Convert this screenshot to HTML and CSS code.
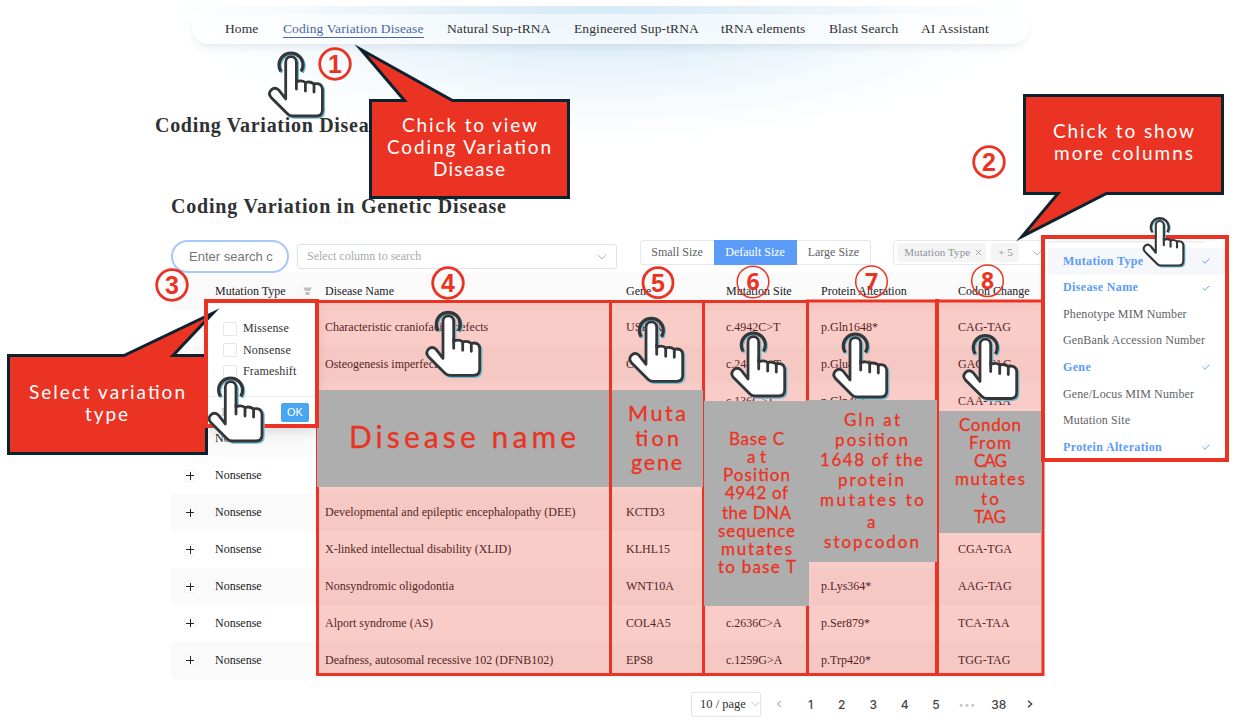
FILE: index.html
```html
<!DOCTYPE html>
<html lang="en">
<head>
<meta charset="utf-8">
<title>Coding Variation Disease</title>
<link rel="stylesheet" href="styles.css">
</head>
<body>
<div class="page">
  <header class="hero">
    <nav class="nav">
      <a>Home</a><a><span class="active">Coding Variation Disease</span></a><a>Natural Sup-tRNA</a><a>Engineered Sup-tRNA</a><a>tRNA elements</a><a>Blast Search</a><a>AI Assistant</a>
    </nav>
  </header>
  <h1 class="title">Coding Variation Disease</h1>
  <main class="content">
    <h2 class="subtitle">Coding Variation in Genetic Disease</h2>
    <div class="toolbar">
      <div class="search"><span>Enter search content</span></div>
      <div class="select"><span>Select column to search</span><svg class="chev" viewBox="0 0 10 6"><path d="M1 1l4 4 4-4"/></svg></div>
      <div class="sizes"><span class="small">Small Size</span><span class="on">Default Size</span><span class="large">Large Size</span></div>
      <div class="multi"><span class="tag">Mutation Type <svg viewBox="0 0 8 8"><path d="M1 1l6 6M7 1l-6 6"/></svg></span><span class="tag count">+ 5</span><svg class="chev" viewBox="0 0 10 6"><path d="M1 1l4 4 4-4"/></svg></div>
    </div>
    <div class="table">
      <div class="row head"><i></i><b class="type">Mutation Type<svg viewBox="0 0 10 10"><path d="M0 .5h10L7.500 4.500h-5zM2.800 5.500h4.400V9H2.800z"/></svg></b><b>Disease Name</b><b>Gene</b><b>Mutation Site</b><b>Protein Alteration</b><b>Codon Change</b></div>
      <div class="row"><i class="plus"></i><span>Nonsense</span><span>Characteristic craniofacial defects</span><span>USP9X</span><span>c.4942C&gt;T</span><span>p.Gln1648*</span><span>CAG-TAG</span></div>
      <div class="row"><i class="plus"></i><span>Nonsense</span><span>Osteogenesis imperfecta</span><span>COL1A1</span><span>c.2437G&gt;T</span><span>p.Glu813*</span><span>GAG-TAG</span></div>
      <div class="row"><i class="plus"></i><span>Nonsense</span><span></span><span></span><span>c.136C&gt;T</span><span>p.Gln46*</span><span>CAA-TAA</span></div>
      <div class="row"><i class="plus"></i><span>Nonsense</span><span></span><span></span><span></span><span></span><span></span></div>
      <div class="row"><i class="plus"></i><span>Nonsense</span><span></span><span></span><span></span><span></span><span></span></div>
      <div class="row"><i class="plus"></i><span>Nonsense</span><span>Developmental and epileptic encephalopathy (DEE)</span><span>KCTD3</span><span></span><span></span><span></span></div>
      <div class="row"><i class="plus"></i><span>Nonsense</span><span>X-linked intellectual disability (XLID)</span><span>KLHL15</span><span></span><span></span><span>CGA-TGA</span></div>
      <div class="row"><i class="plus"></i><span>Nonsense</span><span>Nonsyndromic oligodontia</span><span>WNT10A</span><span></span><span>p.Lys364*</span><span>AAG-TAG</span></div>
      <div class="row"><i class="plus"></i><span>Nonsense</span><span>Alport syndrome (AS)</span><span>COL4A5</span><span>c.2636C&gt;A</span><span>p.Ser879*</span><span>TCA-TAA</span></div>
      <div class="row"><i class="plus"></i><span>Nonsense</span><span>Deafness, autosomal recessive 102 (DFNB102)</span><span>EPS8</span><span>c.1259G&gt;A</span><span>p.Trp420*</span><span>TGG-TAG</span></div>
    </div>
    <div class="pager">
      <div class="per"><span>10 / page</span><svg class="chev" viewBox="0 0 10 6"><path d="M1 1l4 4 4-4"/></svg></div>
      <div class="pages"><svg class="arrow dim" viewBox="0 0 6 8"><path d="M5 1L1.500 4 5 7"/></svg><span>1</span><span>2</span><span>3</span><span>4</span><span>5</span><span class="dots">•••</span><span>38</span><svg class="arrow" viewBox="0 0 6 8"><path d="M1 .7L4.800 4 1 7.300"/></svg></div>
    </div>
  </main>

  <div class="filter">
    <div class="opts"><label><i></i>Missense</label><label><i></i>Nonsense</label><label><i></i>Frameshift</label></div>
    <div class="acts"><span class="reset">Reset</span><span class="ok">OK</span></div>
  </div>

  <div class="menu">
    <div class="edge"></div>
    <div class="item sel hover">Mutation Type<svg viewBox="0 0 8 6"><path d="M.7 3l2.300 2.300L7.300.7"/></svg></div>
    <div class="item sel">Disease Name<svg viewBox="0 0 8 6"><path d="M.7 3l2.300 2.300L7.300.7"/></svg></div>
    <div class="item">Phenotype MIM Number</div>
    <div class="item">GenBank Accession Number</div>
    <div class="item sel">Gene<svg viewBox="0 0 8 6"><path d="M.7 3l2.300 2.300L7.300.7"/></svg></div>
    <div class="item">Gene/Locus MIM Number</div>
    <div class="item">Mutation Site</div>
    <div class="item sel">Protein Alteration<svg viewBox="0 0 8 6"><path d="M.7 3l2.300 2.300L7.300.7"/></svg></div>
  </div>

  <svg class="notes" viewBox="0 0 1244 724">
    <defs>
      <g id="hand">
        <g class="glow" transform="translate(1.2 1.200)">
          <path class="ring" d="M13.200 21.500A12 12 0 1 1 33.400 21.500"/>
          <path d="M18 49V12.200a5.300 5.500 0 0 1 10.700 0V32q5-2.500 9 .5q5-1.500 8.500 1.500q8-1.500 8.500 5V60q0 6-6 6H25q-3 0-5-2L3.500 47.500q-3.500-4 0-7.500q3.500-3.500 7.500 0z"/>
        </g>
        <path class="ring" d="M13.200 21.500A12 12 0 1 1 33.400 21.500"/>
        <path class="palm" d="M18 49V12.200a5.300 5.500 0 0 1 10.700 0V32q5-2.500 9 .5q5-1.500 8.500 1.500q8-1.500 8.500 5V60q0 6-6 6H25q-3 0-5-2L3.500 47.500q-3.500-4 0-7.500q3.500-3.500 7.500 0z"/>
        <path class="palm" d="M28.700 30v9M37.700 32.500v8.500M46.300 34v8"/>
      </g>
    </defs>

    <g class="zones">
      <rect x="317.500" y="301.500" width="293" height="373"/>
      <rect x="610.500" y="301.500" width="93" height="373"/>
      <rect x="703.500" y="301.500" width="104" height="373"/>
      <rect x="807.500" y="301" width="129.500" height="373.500"/>
      <rect x="937" y="301" width="106" height="373.500"/>
    </g>
    <path class="rule" d="M937 299v377"/>
    <g class="plates">
      <rect x="317" y="390" width="292" height="97"/>
      <rect x="612" y="390" width="91" height="97"/>
      <rect x="704" y="401" width="105" height="205"/>
      <rect x="807" y="400" width="130" height="162"/>
      <rect x="939" y="411" width="103" height="122"/>
    </g>

    <g class="callouts">
      <path d="M370.500 100.500H404.500L361 49.500L452.500 100.500H568.500V197.500H370.500Z"/>
      <path d="M1024.500 95.500H1222.500V193.500H1106.500L1022 236.500L1058 193.500H1024.500Z"/>
      <path d="M8.500 355.500H124L213 313L173 355.500H206.500V453.500H8.500Z"/>
    </g>
    <g class="frames">
      <rect x="206" y="301" width="111" height="125"/>
      <rect x="1043" y="237" width="184" height="223"/>
    </g>

    <g class="say">
      <text x="402" y="132" textLength="135">Chick to view</text>
      <text x="387" y="154" textLength="164">Coding Variation</text>
      <text x="433" y="176" textLength="72">Disease</text>
      <text x="1053" y="138" textLength="141">Chick to show</text>
      <text x="1054" y="160" textLength="139">more columns</text>
      <text x="29" y="399" textLength="156">Select variation</text>
      <text x="85" y="421" textLength="43">type</text>
    </g>
    <g class="ink">
      <text class="xl" x="349" y="448" textLength="227">Disease name</text>
      <g class="lg">
        <text x="628" y="420.500" textLength="58">Muta</text>
        <text x="635" y="446" textLength="44">tion</text>
        <text x="631" y="470" textLength="51">gene</text>
      </g>
      <text x="729" y="445" textLength="55">Base C</text>
      <text x="747" y="463" textLength="19">at</text>
      <text x="723" y="481" textLength="67">Position</text>
      <text x="725" y="499" textLength="63">4942 of</text>
      <text x="722" y="519" textLength="69">the DNA</text>
      <text x="718" y="537" textLength="77">sequence</text>
      <text x="721" y="554.500" textLength="71">mutates</text>
      <text x="718" y="573" textLength="78">to base T</text>
      <text x="844" y="426" textLength="56">Gln at</text>
      <text x="835" y="446" textLength="73">position</text>
      <text x="820" y="466" textLength="103">1648 of the</text>
      <text x="838" y="486" textLength="66">protein</text>
      <text x="820" y="506" textLength="104">mutates to</text>
      <text x="867" y="528">a</text>
      <text x="824" y="548" textLength="95">stopcodon</text>
      <text x="959" y="431" textLength="62">Condon</text>
      <text x="969" y="449" textLength="42">From</text>
      <text x="974" y="467" textLength="33">CAG</text>
      <text x="955" y="485" textLength="70">mutates</text>
      <text x="981" y="505" textLength="18">to</text>
      <text x="974" y="523" textLength="32">TAG</text>
    </g>

    <use href="#hand" x="267.700" y="50"/>
    <use href="#hand" transform="translate(1142.300 216) scale(.75)"/>
    <use href="#hand" x="207.300" y="375"/>
    <use href="#hand" x="425" y="309.300"/>
    <use href="#hand" x="628" y="315.300"/>
    <use href="#hand" x="730" y="330"/>
    <use href="#hand" x="832" y="331"/>
    <use href="#hand" x="962" y="332.500"/>

    <g class="nums">
      <circle cx="335" cy="64" r="15.300"/><text x="335" y="73">1</text>
      <circle cx="989" cy="162" r="15.300"/><text x="989" y="171">2</text>
      <circle cx="172" cy="285" r="15.300"/><text x="172" y="294">3</text>
      <circle cx="448" cy="283" r="15.300"/><text x="448" y="292">4</text>
      <circle cx="658" cy="282.700" r="15"/><text x="658" y="291.700">5</text>
    </g>
    <g class="nums thin">
      <circle cx="753" cy="282" r="15.800"/><text x="753" y="290">6</text>
      <circle cx="871.500" cy="281.700" r="15.800"/><text x="871.500" y="290">7</text>
      <circle cx="987.500" cy="280.700" r="15.800"/><text x="987.500" y="289">8</text>
    </g>
  </svg>
</div>
</body>
</html>
```
FILE: styles.css
```css
* { box-sizing: border-box; }
body { margin: 0; background: #fff; font-family: "Liberation Serif", serif; color: #303133; }
.page { position: relative; width: 1244px; height: 724px; overflow: hidden; padding-top: 6px; }
svg { fill: none; }

.hero { height: 102px; padding: 8px 216px 0 192px; margin-bottom: -1px;
  background: radial-gradient(ellipse 440px 135px at 600px 0, #d5eaf6 0%, #e3f0f9 35%, #f5fafd 70%, rgba(255,255,255,0) 100%); height: 140px; }
.nav { display: grid; grid-template-columns: 58px 164px 127px 147px 108px 92px 90px; height: 30px; padding-left: 33px;
  border-radius: 0 0 16px 16px; background: rgba(255,255,255,.58); box-shadow: 0 5px 10px -3px rgba(60,90,110,.14);
  font-size: 13.5px; line-height: 30px; white-space: nowrap; letter-spacing: .12px; }
.active { color: #4a66a5; border-bottom: 1.500px solid #4a66a5; padding-bottom: 1px; }
.title { margin: -32px 0 0 155px; font-size: 20px; line-height: 22px; letter-spacing: .7px; }
.content { padding: 0 200px 0 171px; }
.subtitle { margin: 58px 0 22px; font-size: 20px; line-height: 24px; letter-spacing: .8px; }

.toolbar { display: flex; width: 874px; height: 33px; }
.search { width: 118px; height: 33px; padding: 0 16px; border: 2px solid #a6c8fb; border-radius: 17px; font: 13px/30px "Liberation Sans", sans-serif; color: #757575; }
.search span { display: block; width: 84px; overflow: hidden; white-space: nowrap; }
.select { display: flex; align-items: center; justify-content: space-between; width: 320px; height: 25px; margin: 4px 23px 0 8px; padding: 0 9px; border: 1px solid #dfe2e8; border-radius: 3px; font-size: 12px; color: #a8abb2; }
.chev { width: 10px; height: 6px; stroke: #b4b7bd; stroke-width: 1; }
.sizes { display: flex; width: 232px; height: 25px; margin-right: 22px; border: 1px solid #e4e7ed; border-radius: 3px; font-size: 12px; line-height: 23px; text-align: center; color: #606266; }
.small { width: 73px; } .large { flex: 1; }
.on { width: 83px; margin: -1px 0; line-height: 25px; background: #5a9cf8; color: #fff; }
.multi { display: flex; align-items: center; gap: 5px; width: 152px; height: 25px; padding-left: 3px; border: 1px solid #e4e7ed; border-radius: 3px; }
.multi .chev { margin-left: 8px; }
.tag { width: 89px; height: 19px; padding-left: 7px; border-radius: 3px; background: #f4f4f5; font-size: 11px; line-height: 19px; letter-spacing: .1px; color: #909399; white-space: nowrap; }
.tag svg { width: 7px; height: 7px; margin-left: 2px; stroke: #909399; stroke-width: .9; }
.tag.count { width: 28px; }

.table { width: 873px; font-size: 12px; }
.row { display: grid; grid-template-columns: 44px 110px 301px 100px 95px 137px 86px; height: 36.950px; align-items: center; color: #202124; white-space: nowrap; }
.row:nth-child(odd) { background: #fafafa; }
.row b { font-weight: 400; }
.row.head { height: 36.500px; }
.type { display: flex; align-items: center; }
.type svg { width: 9px; height: 9px; margin-left: 17px; fill: #bfbfbf; }
.plus { justify-self: start; width: 12px; height: 12px; margin-left: 13px; border: 1px solid #f3f3f3; border-radius: 2px;
  background: linear-gradient(#222, #222) center / 8px 1px no-repeat, linear-gradient(#222, #222) center / 1px 8px no-repeat, #fff; }

.pager { display: flex; width: 873px; height: 25px; margin-top: 13px; padding-left: 520px; }
.per { display: flex; align-items: center; width: 78px; padding-left: 8px; gap: 5px; border: 1px solid #e5e5e5; border-radius: 2px; font-size: 12.500px; white-space: nowrap; }
.per .chev { width: 9px; }
.pages { display: grid; grid-template-columns: repeat(9, 31.400px); align-items: center; justify-items: center; margin-left: 2.500px; font: 500 12px Inter, sans-serif; color: #444; }
.arrow { width: 6px; height: 8px; stroke: #333; stroke-width: 1.200; }
.dim { stroke: #bbb; }
.dots { color: #c4c4c4; font-size: 9px; letter-spacing: 1px; }

.filter { position: absolute; left: 208px; top: 303px; width: 108px; height: 122px; padding-top: 15px; background: #fff; box-shadow: 0 6px 14px rgba(0,0,0,.14); font-size: 12px; }
.opts { display: flex; flex-direction: column; height: 78px; padding-left: 15px; }
.opts label { display: flex; align-items: center; height: 21.500px; gap: 6px; letter-spacing: .15px; }
.opts i { width: 14px; height: 14px; border: 1px solid #e6e6e6; border-radius: 2px; }
.acts { display: flex; justify-content: space-between; padding: 6px 7px 0 13px; border-top: 1px solid #eee; }
.reset { color: #bbb; line-height: 18px; }
.ok { width: 28px; height: 19px; border-radius: 2px; background: #49a5ef; color: #fff; font: 11px/19px "Liberation Sans", sans-serif; text-align: center; }

.menu { position: absolute; left: 1045px; top: 239px; width: 180px; height: 219px; padding: 2px 0 0 3px; background: #fff; font-size: 12px; color: #606266; }
.edge { width: 157px; height: 2px; margin-bottom: 5px; background: #f1f1f3; }
.item { display: flex; align-items: center; justify-content: space-between; height: 26.550px; padding: 0 15px; letter-spacing: .12px; white-space: nowrap; }
.item svg { width: 8px; height: 6px; stroke: #5a9cf8; stroke-width: .9; }
.sel { color: #5a9cf8; font-weight: 700; letter-spacing: .35px; }
.hover { background: #f5f7fa; }

.notes { position: absolute; left: 0; top: 0; width: 1244px; height: 724px; }
.zones rect { fill: rgba(235,51,35,.25); stroke: #eb3323; stroke-width: 3; }
.rule { stroke: #eb3323; stroke-width: 4; }
.plates { fill: #aeaeae; }
.callouts path { fill: #eb3323; stroke: #0b2230; stroke-width: 3; stroke-miterlimit: 20; }
.frames rect { stroke: #eb3323; stroke-width: 4; }
.say { font: 19px Lato, sans-serif; fill: #fff; }
.ink { font: 17px Lato, sans-serif; fill: #eb3323; stroke: #eb3323; stroke-width: .3; }
.xl { font-size: 30px; }
.lg { font-size: 21.500px; }
.ring { stroke: #343638; stroke-width: 3.200; }
.palm { fill: #fff; stroke: #343638; stroke-width: 2.800; stroke-linejoin: round; stroke-linecap: round; }
.glow path { stroke: #70bdd3; stroke-width: 3; }
.nums circle { stroke: #eb3323; stroke-width: 2.800; }
.nums text { fill: #eb3323; font: 700 25px "Liberation Sans", sans-serif; text-anchor: middle; }
.thin circle { stroke-width: 1.500; }
.thin text { font: 700 23px "Noto Sans", sans-serif; }
```
